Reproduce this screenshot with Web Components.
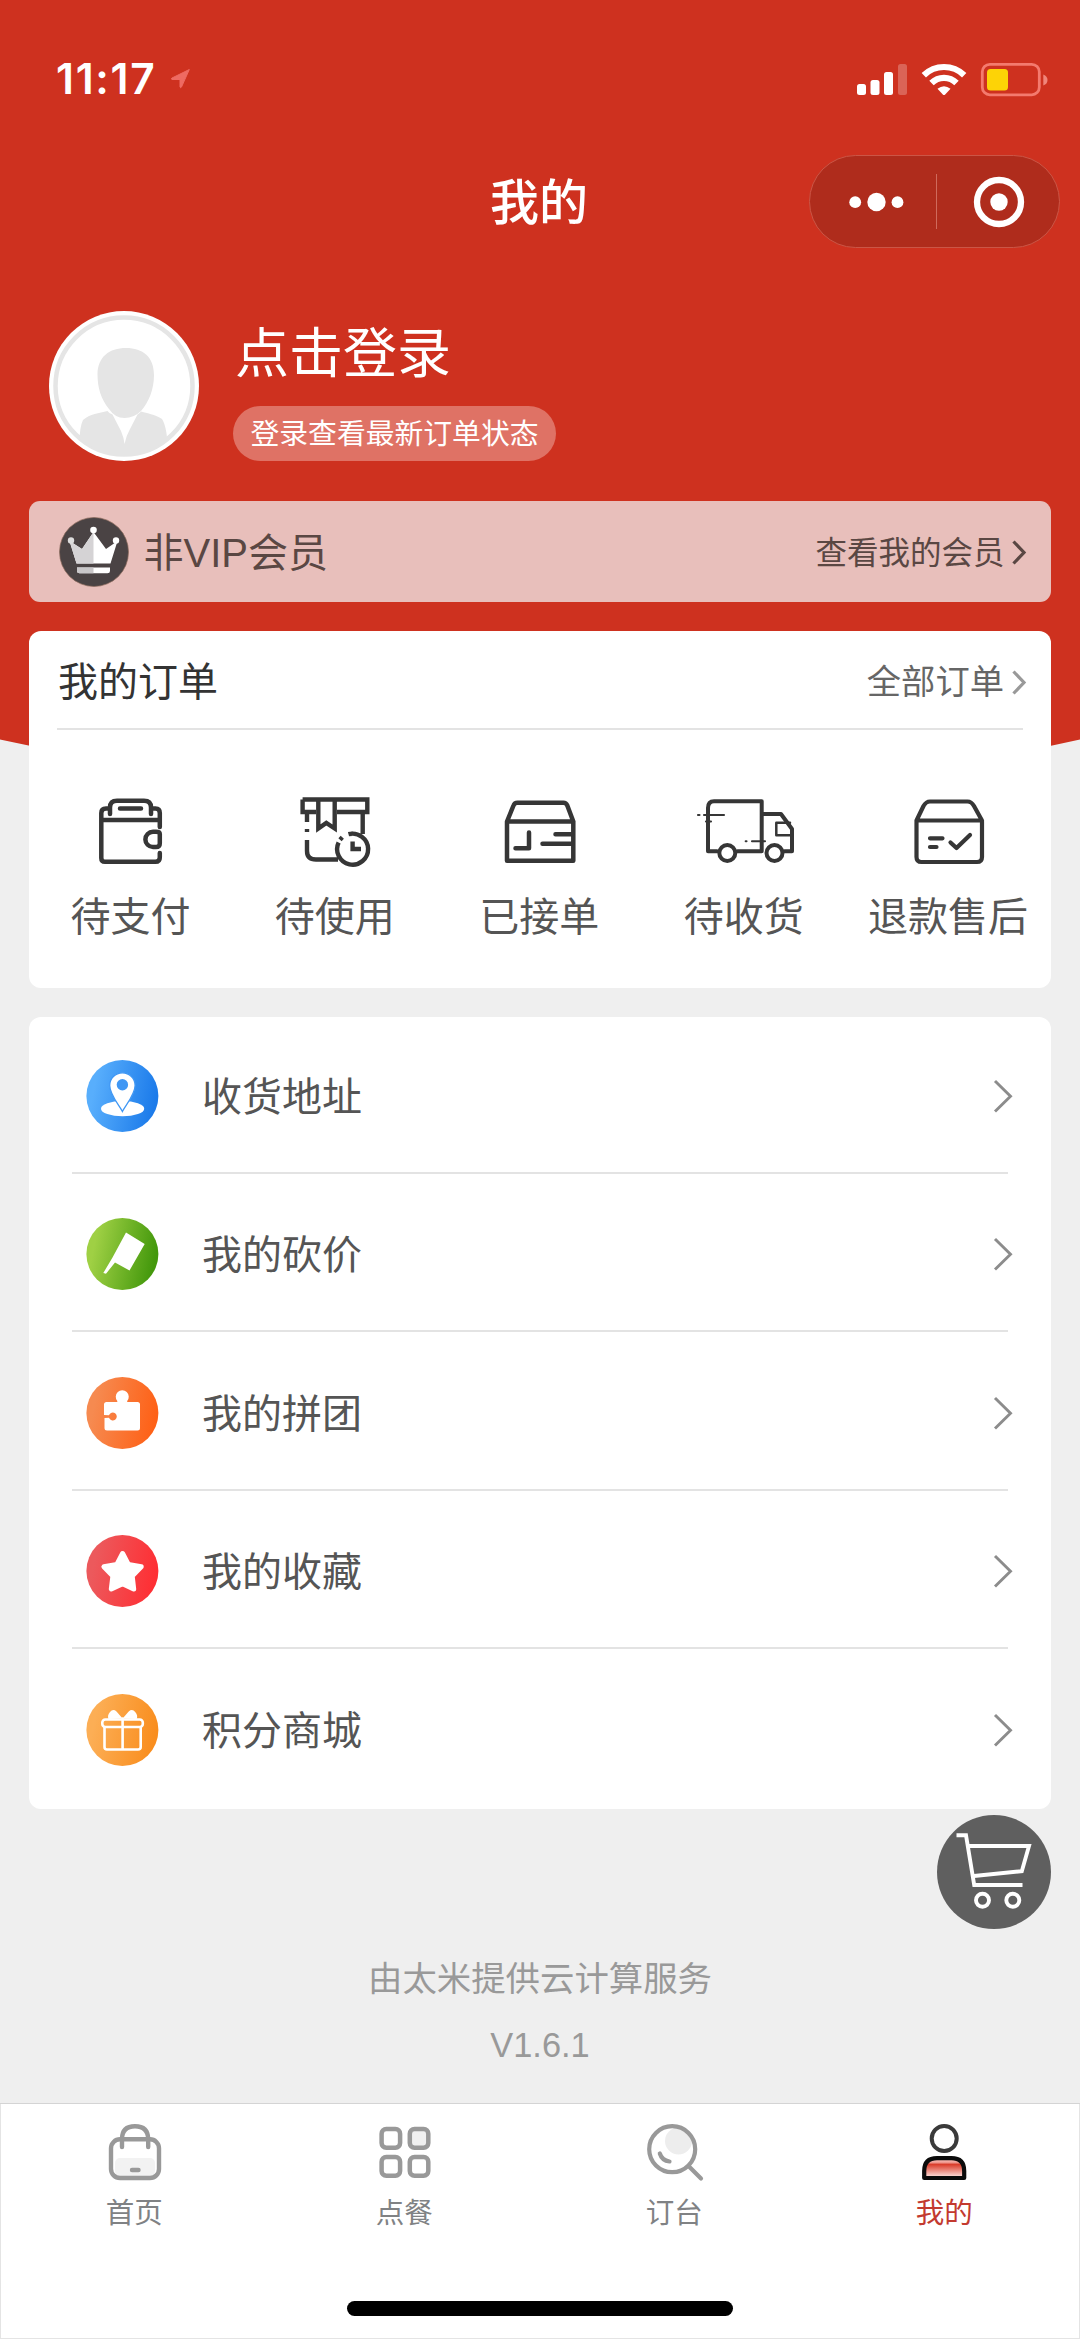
<!DOCTYPE html>
<html lang="zh-CN">
<head>
<meta charset="utf-8">
<title>我的</title>
<style>
html, body { margin: 0; padding: 0; }
body { background: #efefef; font-family: "Liberation Sans", "Noto Sans CJK SC", sans-serif; -webkit-font-smoothing: antialiased; }
</style>
</head>
<body>
<mine-page></mine-page>
<script>
const define = (name, html, setup) => {
  const tpl = document.createElement('template');
  tpl.innerHTML = html;
  customElements.define(name, class extends HTMLElement {
    constructor() {
      super();
      this.attachShadow({ mode: 'open' }).appendChild(tpl.content.cloneNode(true));
    }
    connectedCallback() { if (setup) setup(this, this.shadowRoot); }
  });
};

// Each icon: [viewBox, width, height, markup]
const disc = (id, a, b, y, body) => [`86 ${y - 36} 73 72`, 73, 72,
  `<defs><linearGradient id="${id}" x1="0" y1="0.4" x2="1" y2="0.6"><stop offset="0.1" stop-color="${a}"/><stop offset="0.95" stop-color="${b}"/></linearGradient></defs>
   <circle cx="122.4" cy="${y}" r="36" fill="url(#${id})"/>${body}`];
const line = (c, w, d, extra = '') => `<g fill="none" stroke="${c}" stroke-width="${w}" stroke-linecap="round" stroke-linejoin="round" ${extra}>${d}</g>`;
const ICONS = {
  arrow: ['170 68 22 22', 22, 22, `<path d="M189.300 69.500L181.500 87Q180.600 88.500 180 87V79.500H172Q170.500 78.800 172 78Z" fill="#ee6a62" stroke="#ee6a62" stroke-width="1" stroke-linejoin="round"/>`],
  signal: ['856 62 52 33', 52, 33, `<g fill="#fff"><rect x="857" y="83" width="9" height="11" rx="2.500"/><rect x="870.500" y="79" width="9" height="15" rx="2.500"/><rect x="884" y="71" width="9" height="23" rx="2.500"/><rect x="898" y="63" width="9" height="31" rx="2.500" opacity=".25"/></g>`],
  wifi: ['921 61 46 34', 46, 34, `<g fill="none" stroke="#fff" stroke-width="6.200"><path d="M923.800 74.200A29 29 0 0 1 964.200 74.200"/><path d="M931.500 82A17.600 17.600 0 0 1 956.500 82"/></g><path d="M937.500 87.700Q944 82.600 950.500 87.700L945.200 93.500Q944 94.600 942.800 93.500Z" fill="#fff"/>`],
  battery: ['980 61 69 35', 69, 35, `<rect x="982.300" y="63.300" width="57" height="30.500" rx="7.500" fill="none" stroke="#f47a6e" stroke-width="2.800"/><path d="M1043.300 73.500Q1047.500 75 1047.500 79T1043.300 84.500Z" fill="#f0867b"/><rect x="987" y="68" width="21" height="21.500" rx="3.500" fill="#fdd306"/>`],
  dots: ['847 192 57 20', 57, 20, `<g fill="#fff"><circle cx="854.200" cy="202.200" r="5.900"/><circle cx="875.500" cy="202" r="9.200"/><circle cx="896.500" cy="202.200" r="5.900"/></g>`],
  target: ['972 176 52 52', 52, 52, `<circle cx="998" cy="202" r="22" fill="none" stroke="#fff" stroke-width="6.300"/><circle cx="998" cy="202" r="8.700" fill="#fff"/>`],
  avatar: ['49 311 150 150', 150, 150, `<defs><clipPath id="in"><circle cx="124" cy="386" r="69"/></clipPath></defs><circle cx="124" cy="386" r="75" fill="#fff"/><circle cx="124" cy="386" r="68.500" fill="#fff" stroke="#e5e5e5" stroke-width="4.500"/>
    <g clip-path="url(#in)" fill="#e5e5e5"><path d="M126 348C143 348 154 357 154 375C154 389 149 402 141 411Q134 418 124.500 418Q115 418 109 409C101 399 97.500 388 97.500 374C98 357 109 348 126 348Z"/><path d="M107.500 411Q109 413.500 112.500 414.500L121 431Q124 438 124.500 444Q126 436 130 429L137.500 414.500Q140 413 141 411.500C151 414 158 416 162 419Q168 428 168 458H80Q78 430 83 420C90 414 99 413 107.500 411Z"/></g>`],
  crown: ['59 517 70 70', 70, 70, `<circle cx="94" cy="552" r="34.500" fill="#4a4344" stroke="#8b6a5b" stroke-width=".7"/><path d="M69.500 541L82 549L93.500 532L106 549L117.500 541L110.500 563.500H76.500Z" fill="#fff"/><path d="M93.500 532L82 549L69.500 541L76.500 563.500H93.500Z" fill="#d5d3d5"/><circle cx="93.500" cy="530" r="3.300" fill="#fff"/><circle cx="71" cy="540.500" r="3.200" fill="#ddd"/><circle cx="116" cy="540.500" r="3.200" fill="#fff"/><path d="M77 567.500H110V571Q110 573.300 107.500 573.300H79.500Q77 573.300 77 571Z" fill="#fff"/><path d="M77 567.500H93.500V573.300H79.500Q77 573.300 77 571Z" fill="#c9c7c9"/>`],
  chevS: ['1010 668.5 18 27', 18, 27, `<path d="M1013.500 672L1024 683L1013.500 694" fill="none" stroke="currentColor" stroke-width="3.200"/>`],
  chev: ['993 1712 22 36', 22, 36, `<path d="M996 1715L1011.500 1730.300L996 1745.500" fill="none" stroke="#8c8c8c" stroke-width="2.900"/>`],
  wallet: ['98 797 68 70', 68, 70, line('#363636', 4.5, `<path d="M111 814V807.500Q111 800.800 118 800.800H145Q152 800.800 152 807.500V814M111 808.500H107Q102.300 808.500 102.300 813V858Q102.300 861.800 106 861.800H156.500Q160.800 861.800 160.800 857.500V853M152 808.500H156.500Q160.800 808.500 160.800 813V827M102.300 820H160.800M121 808.500H142M160.800 834V843.500Q160.800 847 157 847H154A7.600 7.600 0 0 1 154 831.800H157Q160.800 831.800 160.800 834"/>`)],
  pending: ['298 795 76 74', 76, 74, line('#363636', 4.4, `<path d="M302.600 799.500H367.300V812H337M316 812H302.600V799.500M318.300 800V828.500L326.300 823L334.700 828.500V800M307 814V822M307 829V832M307 840V851Q307 859.500 316 859.500H338M362.700 813V834M338.600 842.500A15.500 15.500 0 1 0 348.500 834.200A15.500 15.500 0 0 1 352.600 833.700M340 839.800L342.300 837.300M352.600 841.500V849H361"/>`, 'style="stroke-linecap:butt;stroke-linejoin:miter"')],
  accepted: ['503 798 75 68', 75, 68, line('#363636', 4.500, `<path d="M507 821.500V860.700H573.300V821.500H507L513.500 805.500Q514.500 802.700 517.500 802.700H563.500Q566 802.700 567.300 805.500L573.300 821.500M515.500 848.300H529V832.500M555.500 834.200H572M542.500 843.700H572"/>`)],
  truck: ['695 798 99 68', 99, 68, line('#363636', 4, `<path d="M717 851.300H708V808Q708 801.200 714 801.200H761.700V851.300H737.500M761.700 814H781L792 829V851.300H784.500"/><circle cx="727.300" cy="853" r="8"/><circle cx="774.500" cy="853" r="8"/><g stroke-width="2.500"><path d="M790 822.700H776.300V835.300H792"/><path d="M698 815H699.500M704 815H724M706 821.500H711M745.700 841.200H746.500M752 841.200H765" stroke-width="2.100"/></g>`)],
  refund: ['912 798 74 68', 74, 68, line('#363636', 4.200, `<path d="M916.500 820.500V857Q916.500 862 921.500 862H977Q982 862 982 857V820.500H916.500L923.500 806Q926 801.500 930 801.500H967.500Q971.500 801.500 974 806L982 820.500M930 838.300H942.500M930 847H936.500M950.500 842.500L956.500 848L970 835"/>`)],
  pin: disc('g', '#58aefc', '#1c7bea', 1096, `<ellipse cx="122.600" cy="1108.700" rx="21.600" ry="7.600" fill="#fff"/><path d="M122.400 1111.500C119 1105 109.700 1094.500 109.700 1085.500A12.700 12.700 0 0 1 135.100 1085.500C135.100 1094.500 125.800 1105 122.400 1111.500Z" fill="#fff" stroke="#3f97f4" stroke-width="1.300"/><circle cx="122.400" cy="1084.700" r="5.700" fill="#3f97f4"/>`),
  flag: disc('g', '#9fd044', '#43980c', 1254, `<path d="M126 1232.500L144.700 1244L129.500 1270.500L115 1262.500L106 1273.700L103.300 1273L112.500 1257.500Z" fill="#fff"/>`),
  puzzle: disc('g', '#f68a50', '#fe6117', 1412.500, `<path d="M106.500 1401.500H117.300V1400.500A6.500 6.500 0 1 1 127.200 1400.500V1401.500H137.500Q140 1401.500 140 1404V1427.500Q140 1430 137.500 1430H107Q104.500 1430 104.500 1427.500V1417.500L109 1417.300A4 4 0 1 0 109 1414.700L104 1414.500V1404Q104 1401.500 106.500 1401.500Z" fill="#fff"/>`),
  star: disc('g', '#ec595c', '#fe2f34', 1571, `<path d="M122.600 1553.500L128.300 1564.400L141.200 1566.800L132.200 1576L133.700 1589L122.600 1583.700L111.300 1589L112.900 1576L103.900 1566.800L116.900 1564.400Z" fill="#fff" stroke="#fff" stroke-width="5" stroke-linejoin="round"/>`),
  gift: disc('g', '#fcae55', '#f98e1f', 1729.500, `<path d="M122.600 1718L116.500 1711Q113 1708 110 1711.500Q107 1715 108.500 1718.500ZM122.600 1718L128.700 1711Q132.300 1708 135.200 1711.500Q138.200 1715 136.700 1718.500Z" fill="#fff"/>` + line('#fff', 2.6, `<rect x="102.300" y="1719" width="40.500" height="7.500" rx="3"/><path d="M104.500 1727V1746.500Q104.500 1749 107 1749H138Q140.700 1749 140.700 1746.500V1727M122.600 1718V1748.500"/>`)),
  cart: ['936.500 1815 114 114', 114, 114, `<circle cx="993.500" cy="1872" r="57" fill="#5f5f5f"/><g fill="none" stroke="#fff" stroke-width="3.900"><path d="M956 1835.300H965.500L973.700 1885H1022M968.500 1846H1028.500L1021.300 1871.200L973.500 1876"/><circle cx="982" cy="1900.300" r="6.500"/><circle cx="1012.300" cy="1900.300" r="6.500"/></g>`],
  bag: ['107 2122 56 60', 56, 60, `<rect x="115" y="2158" width="40" height="18" rx="5" fill="#f2f2f2"/>` + line('#999', 4.4, `<rect x="111" y="2139.300" width="48" height="38.700" rx="9"/><path d="M122 2147V2139Q122 2126.200 135 2126.200T148.200 2139V2147M132 2170H138.500"/>`)],
  grid: ['377 2124 56 56', 56, 56, `<g fill="#fff" stroke="#999" stroke-width="4.500"><rect x="381.600" y="2129" width="18.500" height="18.800" rx="4.700"/><rect x="409.800" y="2129" width="18.500" height="18.800" rx="4.700" fill="#f0f0f0"/><rect x="381.600" y="2157" width="18.500" height="18.800" rx="4.700"/><rect x="409.800" y="2157" width="18.500" height="18.800" rx="4.700"/></g>`],
  search: ['646 2122 58 60', 58, 60, `<circle cx="678.500" cy="2141" r="13.500" fill="#ededed"/>` + line('#999', 4.2, `<circle cx="672.200" cy="2149.200" r="23"/><path d="M689.500 2167L701 2178.500M659.800 2153.500Q662 2160.500 669.500 2161.500"/>`)],
  person: ['921 2122 48 60', 48, 60, `<defs><linearGradient id="g" x1="0" y1="0" x2="0" y2="1"><stop offset="0" stop-color="#f6b9b2"/><stop offset=".2" stop-color="#f3a59c"/><stop offset=".32" stop-color="#da3d2b"/><stop offset=".9" stop-color="#fbd5d0"/></linearGradient></defs><circle cx="944.200" cy="2138.500" r="12.500" fill="none" stroke="#3a3a3a" stroke-width="4"/><path d="M924.200 2178V2171Q924.200 2158.200 937 2158.200H951.500Q964.200 2158.200 964.200 2171V2178Z" fill="url(#g)" stroke="#0b0b0b" stroke-width="4.200" stroke-linejoin="round"/>`],
};
define('line-icon', `<style>:host{display:block;flex:none;line-height:0}svg{display:block}</style><span></span>`, (el, root) => {
  const [vb, w, h, body] = ICONS[el.getAttribute('name')];
  root.querySelector('span').innerHTML = `<svg viewBox="${vb}" width="${w}" height="${h}" aria-hidden="true">${body}</svg>`;
});
const fillIcon = (el, root) => {
  const icon = document.createElement('line-icon');
  icon.setAttribute('name', el.getAttribute('icon'));
  root.querySelector('.i').replaceChildren(icon);
};

define('status-bar', `<style>
:host{display:flex;align-items:center;height:146px;padding:12px 31px 0 56px;box-sizing:border-box;color:#fff}
.time{font:600 42.500px/50px Inter,sans-serif;width:98px;letter-spacing:1.700px;margin-right:16px;white-space:nowrap}
.sys{margin-left:auto;display:flex;align-items:center;gap:13px}
</style><span class="time"><slot></slot></span><line-icon name="arrow"></line-icon>
<div class="sys"><line-icon name="signal"></line-icon><line-icon name="wifi"></line-icon><line-icon name="battery"></line-icon></div>`);

define('capsule-menu', `<style>
:host{display:flex;align-items:center;box-sizing:border-box;width:251px;height:93px;border:1.500px solid #cb5646;border-radius:47px;background:#af2c1c}
div{flex:1;display:flex;justify-content:center}
i{width:1px;height:55px;background:#cf6a5c}
.l{padding-left:6px}.r{padding-left:2px}
</style><div class="l"><line-icon name="dots"></line-icon></div><i></i><div class="r"><line-icon name="target"></line-icon></div>`);

define('nav-bar', `<style>
:host{display:grid;grid-template-columns:1fr auto 1fr;align-items:center;height:111px;padding:0 20px;color:#fff}
h1{grid-column:2;margin:2px 2px 0 0;font-size:49px;line-height:60px;font-weight:500}
capsule-menu{justify-self:end}
</style><h1><slot></slot></h1><capsule-menu></capsule-menu>`);

define('user-profile', `<style>
:host{display:flex;gap:34px;padding:54px 49px 0;height:150px;color:#fff}
.info{display:flex;flex-direction:column;align-items:flex-start;justify-content:space-between}
.name{font-size:54px;line-height:60px;margin:13px 0 0 2px;font-weight:400}
.tip{font-size:28.800px;line-height:55px;height:54px;padding:1px 17.500px 0;margin-top:-2px;border-radius:28px;background:#df7265;white-space:nowrap}
</style><line-icon name="avatar"></line-icon><div class="info"><div class="name"><slot></slot></div><div class="tip"><slot name="tip"></slot></div></div>`);

define('vip-bar', `<style>
:host{display:flex;align-items:center;height:101px;margin:40px 29px 0;padding:0 23px 0 30px;border-radius:11px;background:#e8bfbb;color:#5a4743}
.t{font-size:40px;margin-left:14.500px;padding-bottom:3px}
.more{margin-left:auto;font-size:31.500px;margin-right:5.500px;padding-bottom:3px}
</style><line-icon name="crown"></line-icon><span class="t"><slot></slot></span><span class="more"><slot name="more"></slot></span><line-icon name="chevS"></line-icon>`);

define('order-item', `<style>
:host{flex:1 1 0;min-width:0;display:flex;flex-direction:column;align-items:center;color:#555;font-size:40px;line-height:48px;white-space:nowrap}
.i{height:74px;display:flex;align-items:center;margin-bottom:23.500px}
.t{margin-right:1.500px}
</style><div class="i"></div><span class="t"><slot></slot></span>`, fillIcon);

define('order-card', `<style>
:host{display:block;height:357.500px;margin:28.700px 29px 0;background:#fff;border-radius:12px}
header{display:flex;align-items:center;height:99.500px;margin:0 28px;padding:0 0 0 1px;box-sizing:border-box;border-bottom:2px solid #e3e3e3}
h2{margin:0;font-weight:400;font-size:40px;color:#333}
.more{margin-left:auto;font-size:34.300px;color:#666;margin-right:6px}
line-icon{color:#999;margin:4px -5px 0 0}
.items{display:flex;padding-top:65px}
</style><header><h2><slot name="title"></slot></h2><span class="more"><slot name="more"></slot></span><line-icon name="chevS"></line-icon></header><div class="items"><slot></slot></div>`);

define('menu-card', `<style>
:host{display:block;height:792.500px;box-sizing:border-box;margin:28.500px 29px 0;padding:0 43px;background:#fff;border-radius:12px}
</style><slot></slot>`);

define('menu-row', `<style>
:host{display:flex;align-items:center;height:158.500px;box-sizing:border-box;padding:4px 0 0 14px;border-bottom:2px solid #e3e3e3;font-size:40px;color:#555}
:host(:first-child){height:157.300px}
:host(:last-child){border-bottom-color:transparent}
.t{margin-left:43px;flex:1;padding-bottom:4px}
.c{margin-right:-6px}
</style><span class="i"></span><span class="t"><slot></slot></span><line-icon class="c" name="chev"></line-icon>`, fillIcon);

define('page-credit', `<style>
:host{display:flex;flex-direction:column;align-items:center;flex:1;padding-top:144.500px;font-size:34.400px;color:#999}
div{line-height:50px;margin-bottom:16px}
</style><div><slot></slot></div><div><slot name="version"></slot></div>`);

define('tab-item', `<style>
:host{flex:1;display:flex;flex-direction:column;align-items:center;font-size:28.500px;line-height:36px;color:#808284}
:host([active]){color:#c33a2f}
.i{height:60px;display:flex;align-items:center;margin:18px 0 13px}
.t{margin-right:1.500px}
</style><div class="i"></div><span class="t"><slot></slot></span>`, fillIcon);

define('tab-bar', `<style>
:host{display:flex;flex-direction:column;align-items:center;height:236px;padding-top:1px;box-sizing:border-box;background:#fff;box-shadow:inset 0 1px 0 #d4d4d4,inset 0 0 0 1px #e4e4e4}
nav{display:flex;width:100%;height:197px}
.home{width:386px;height:15px;border-radius:7.500px;background:#000}
</style><nav><slot></slot></nav><div class="home"></div>`);

define('cart-button', `<style>
:host{position:absolute;left:936.500px;top:1815px}
</style><line-icon name="cart"></line-icon>`);

define('mine-page', `<style>
:host{display:grid;grid-template-columns:1080px;width:1080px;height:2339px;overflow:hidden;background:#efefef;position:relative}
.backdrop,main{grid-area:1/1}
.backdrop{display:block;width:1080px;height:820px}
main{display:flex;flex-direction:column;min-height:0;min-width:0;position:relative}
main>*{flex-shrink:0}
</style>
<svg class="backdrop" viewBox="0 0 1080 820"><path d="M0 0H1080V739.500Q540 860 0 739.500Z" fill="#ce311f"/></svg>
<main>
<status-bar>11:17</status-bar>
<nav-bar>我的</nav-bar>
<user-profile>点击登录<span slot="tip">登录查看最新订单状态</span></user-profile>
<vip-bar>非VIP会员<span slot="more">查看我的会员</span></vip-bar>
<order-card><span slot="title">我的订单</span><span slot="more">全部订单</span>
<order-item icon="wallet">待支付</order-item><order-item icon="pending">待使用</order-item><order-item icon="accepted">已接单</order-item><order-item icon="truck">待收货</order-item><order-item icon="refund">退款售后</order-item></order-card>
<menu-card><menu-row icon="pin">收货地址</menu-row><menu-row icon="flag">我的砍价</menu-row><menu-row icon="puzzle">我的拼团</menu-row><menu-row icon="star">我的收藏</menu-row><menu-row icon="gift">积分商城</menu-row></menu-card>
<page-credit>由太米提供云计算服务<span slot="version">V1.6.1</span></page-credit>
<tab-bar><tab-item icon="bag">首页</tab-item><tab-item icon="grid">点餐</tab-item><tab-item icon="search">订台</tab-item><tab-item icon="person" active>我的</tab-item></tab-bar>
<cart-button></cart-button>
</main>`);
</script>
</body>
</html>
